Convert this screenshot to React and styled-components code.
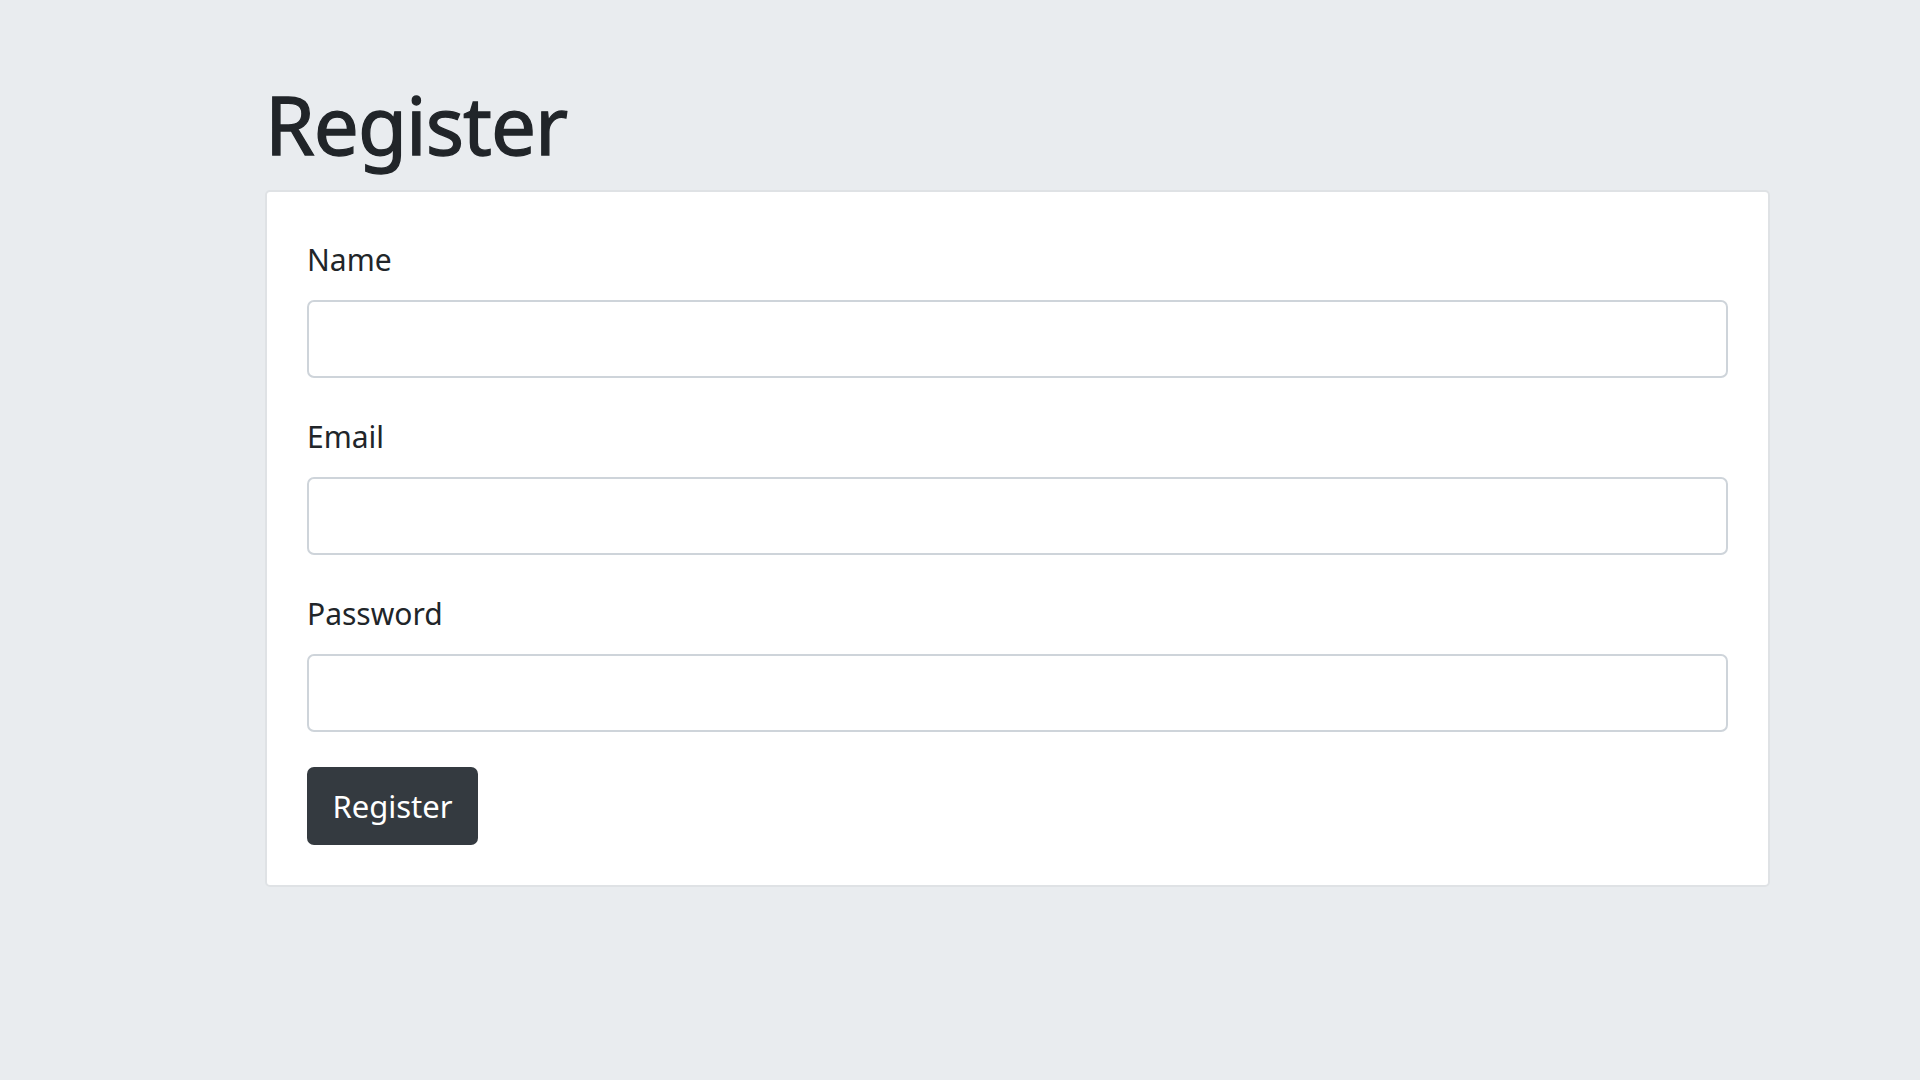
import React from "react";
import styled, { createGlobalStyle } from "styled-components";

const GlobalStyle = createGlobalStyle`
  html, body {
    margin: 0;
    padding: 0;
    background-color: #e9ecef;
  }
  body {
    font-family: "Segoe UI", "Noto Sans", "Open Sans", sans-serif;
    color: #212529;
  }
  * {
    box-sizing: border-box;
  }
`;

const Page = styled.div`
  min-height: 1080px;
  padding-top: 74px;
`;

const Container = styled.div`
  width: 1505px;
  margin-left: 265px;
`;

const Title = styled.h1`
  margin: 0 0 16px;
  font-size: 80px;
  font-weight: 400;
  line-height: 100px;
  letter-spacing: -1px;
  -webkit-text-stroke: 1.3px #212529;
`;

const Card = styled.div`
  background-color: #ffffff;
  border: 2px solid #dfe2e5;
  border-radius: 5px;
  padding: 41px 40px 40px;
`;

const FormGroup = styled.div`
  margin-bottom: 32px;
`;

const Label = styled.label`
  display: block;
  font-size: 30px;
  line-height: 50px;
  padding-top: 2px;
  margin-bottom: 15px;
`;

const Input = styled.input`
  display: block;
  width: 100%;
  height: 78px;
  border: 2px solid #ced4da;
  border-radius: 7px;
  padding: 0 25px;
  font-size: 32px;
  font-family: inherit;
  color: #495057;
  background: #ffffff;
  outline: none;
`;

const Button = styled.button`
  display: inline-block;
  margin-top: 3px;
  height: 78px;
  width: 171px;
  border: none;
  border-radius: 7px;
  background-color: #343a40;
  color: #ffffff;
  font-family: inherit;
  font-size: 31px;
  line-height: 1;
  cursor: pointer;
`;

const fields = [
  { label: "Name", type: "text" },
  { label: "Email", type: "email" },
  { label: "Password", type: "password" },
];

function App() {
  return (
    <>
      <GlobalStyle />
      <Page>
        <Container>
          <Title>Register</Title>
          <Card>
            <form onSubmit={(e) => e.preventDefault()}>
              {fields.map((f) => (
                <FormGroup key={f.label}>
                  <Label>{f.label}</Label>
                  <Input type={f.type} />
                </FormGroup>
              ))}
              <Button type="submit">Register</Button>
            </form>
          </Card>
        </Container>
      </Page>
    </>
  );
}

export default App;
